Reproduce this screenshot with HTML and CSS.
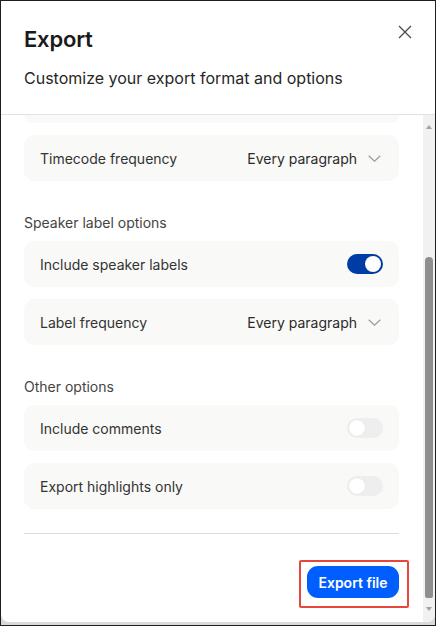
FILE: index.html
```html
<!DOCTYPE html>
<html lang="en">
<head>
<meta charset="utf-8">
<title>Export</title>
<link rel="stylesheet" href="styles.css">
</head>
<body>
<div class="window">
  <div class="dialog">
    <header class="header">
      <div class="title-row">
        <h1 class="title">Export</h1>
        <button class="close" aria-label="Close">
          <svg width="14" height="14" viewBox="0 0 14 14"><path d="M1 1 L13 13 M13 1 L1 13" stroke="#4a4a4a" stroke-width="1.3" fill="none"/></svg>
        </button>
      </div>
      <p class="subtitle">Customize your export format and options</p>
    </header>
    <div class="body">
      <div class="scroll">
        <div class="card card-clipped"></div>
        <div class="card row row-select first-row">
          <span class="label">Timecode frequency</span>
          <span class="select">Every paragraph<svg class="chev" width="13" height="7" viewBox="0 0 13 7"><path d="M0.7 0.7 L6.5 6.2 L12.3 0.7" stroke="#9b9b9b" stroke-width="1.2" fill="none"/></svg></span>
        </div>
        <section class="section">
          <h2 class="section-title">Speaker label options</h2>
          <div class="card row">
            <span class="label">Include speaker labels</span>
            <span class="toggle on"><span class="knob"></span></span>
          </div>
          <div class="card row row-select">
            <span class="label">Label frequency</span>
            <span class="select">Every paragraph<svg class="chev" width="13" height="7" viewBox="0 0 13 7"><path d="M0.7 0.7 L6.5 6.2 L12.3 0.7" stroke="#9b9b9b" stroke-width="1.2" fill="none"/></svg></span>
          </div>
        </section>
        <section class="section">
          <h2 class="section-title">Other options</h2>
          <div class="card row">
            <span class="label">Include comments</span>
            <span class="toggle"><span class="knob"></span></span>
          </div>
          <div class="card row">
            <span class="label">Export highlights only</span>
            <span class="toggle"><span class="knob"></span></span>
          </div>
        </section>
        <footer class="footer">
          <div class="divider"></div>
          <div class="actions">
            <span class="highlight"><button class="btn-primary">Export file</button></span>
          </div>
        </footer>
      </div>
      <div class="scrollbar">
        <span class="arrow arrow-up"></span>
        <span class="thumb"></span>
        <span class="arrow arrow-down"></span>
      </div>
    </div>
  </div>
</div>
</body>
</html>
```

FILE: styles.css
```css
* { box-sizing: border-box; }
html, body { margin: 0; padding: 0; }
body {
  width: 437px;
  height: 626px;
  overflow: hidden;
  font-family: Inter, "Noto Sans", sans-serif;
  background: #ffffff;
}
.window {
  width: 436px;
  height: 626px;
  border: 1px solid #1f1f1f;
  background: #d9d9d9;
}
.dialog {
  height: 621px;
  background: #ffffff;
  border-radius: 0 0 8px 8px;
  display: flex;
  flex-direction: column;
  overflow: hidden;
}
.header {
  padding: 19px 18px 24px 23px;
  border-bottom: 1px solid #e2e2e2;
  flex: none;
}
.title-row {
  display: flex;
  justify-content: space-between;
  align-items: flex-start;
}
.title {
  margin: 5px 0 0;
  font-size: 22px;
  line-height: 28px;
  font-weight: 600;
  color: #1a1a1a;
  letter-spacing: -0.2px;
}
.close {
  width: 24px;
  height: 24px;
  padding: 0;
  border: 0;
  background: transparent;
  display: flex;
  align-items: center;
  justify-content: center;
}
.subtitle {
  margin: 13px 0 0;
  font-size: 16px;
  line-height: 24px;
  color: #262626;
}
.body {
  flex: 1;
  display: flex;
  min-height: 0;
}
.scroll {
  flex: 1;
  overflow: hidden;
  padding: 0 24px 0 23px;
  display: flex;
  flex-direction: column;
}
.card {
  background: #f9f9f8;
  border-radius: 10px;
  flex: none;
}
.card-clipped {
  height: 8px;
  border-radius: 0 0 10px 10px;
}
.first-row { margin-top: 12px; }
.row {
  height: 46px;
  display: flex;
  align-items: center;
  justify-content: space-between;
  padding: 0 16px;
}
.row-select { padding-right: 18px; }
.label {
  font-size: 14px;
  color: #333333;
}
.select {
  display: flex;
  align-items: center;
  font-size: 14px;
  color: #2b2b2b;
}
.chev { margin-left: 11px; margin-top: 1px; }
.section {
  margin-top: 32px;
  display: flex;
  flex-direction: column;
  gap: 12px;
}
.section-title {
  margin: 0 0 -4px;
  font-size: 14px;
  line-height: 20px;
  font-weight: 400;
  color: #444444;
}
.toggle {
  width: 36px;
  height: 20px;
  border-radius: 10px;
  background: #eeeeee;
  display: flex;
  align-items: center;
  padding: 0 2px;
}
.toggle .knob {
  width: 16px;
  height: 16px;
  border-radius: 50%;
  background: #ffffff;
  box-shadow: 0 0 1px rgba(0,0,0,0.12);
}
.toggle.on {
  background: #003ca6;
  justify-content: flex-end;
}
.footer {
  margin-top: 24px;
  flex: none;
}
.divider {
  height: 1px;
  background: #dedede;
}
.actions {
  display: flex;
  justify-content: flex-end;
  margin-top: 32px;
}
.highlight {
  display: inline-flex;
  border: 2px solid #e5473c;
  border-radius: 2px;
  padding: 4px 8px 8px 6px;
  margin: -6px -10px 0 0;
}
.btn-primary {
  width: 92px;
  height: 32px;
  border: 0;
  border-radius: 11px;
  background: #005dfe;
  color: #ffffff;
  font-family: Inter, "Noto Sans", sans-serif;
  font-size: 14px;
  font-weight: 600;
  padding: 0;
}
.scrollbar {
  width: 12px;
  flex: none;
  background: #f1f1f1;
  display: flex;
  flex-direction: column;
  align-items: center;
}
.arrow {
  width: 0;
  height: 0;
  border-left: 3.5px solid transparent;
  border-right: 3.5px solid transparent;
}
.arrow-up {
  margin-top: 10px;
  border-bottom: 4px solid #a3a3a3;
}
.arrow-down {
  margin-top: 9px;
  border-top: 4px solid #a3a3a3;
}
.thumb {
  margin-top: 128px;
  width: 8px;
  height: 341px;
  border-radius: 4px 4px 2px 2px;
  background: #8f8f8f;
}
```
